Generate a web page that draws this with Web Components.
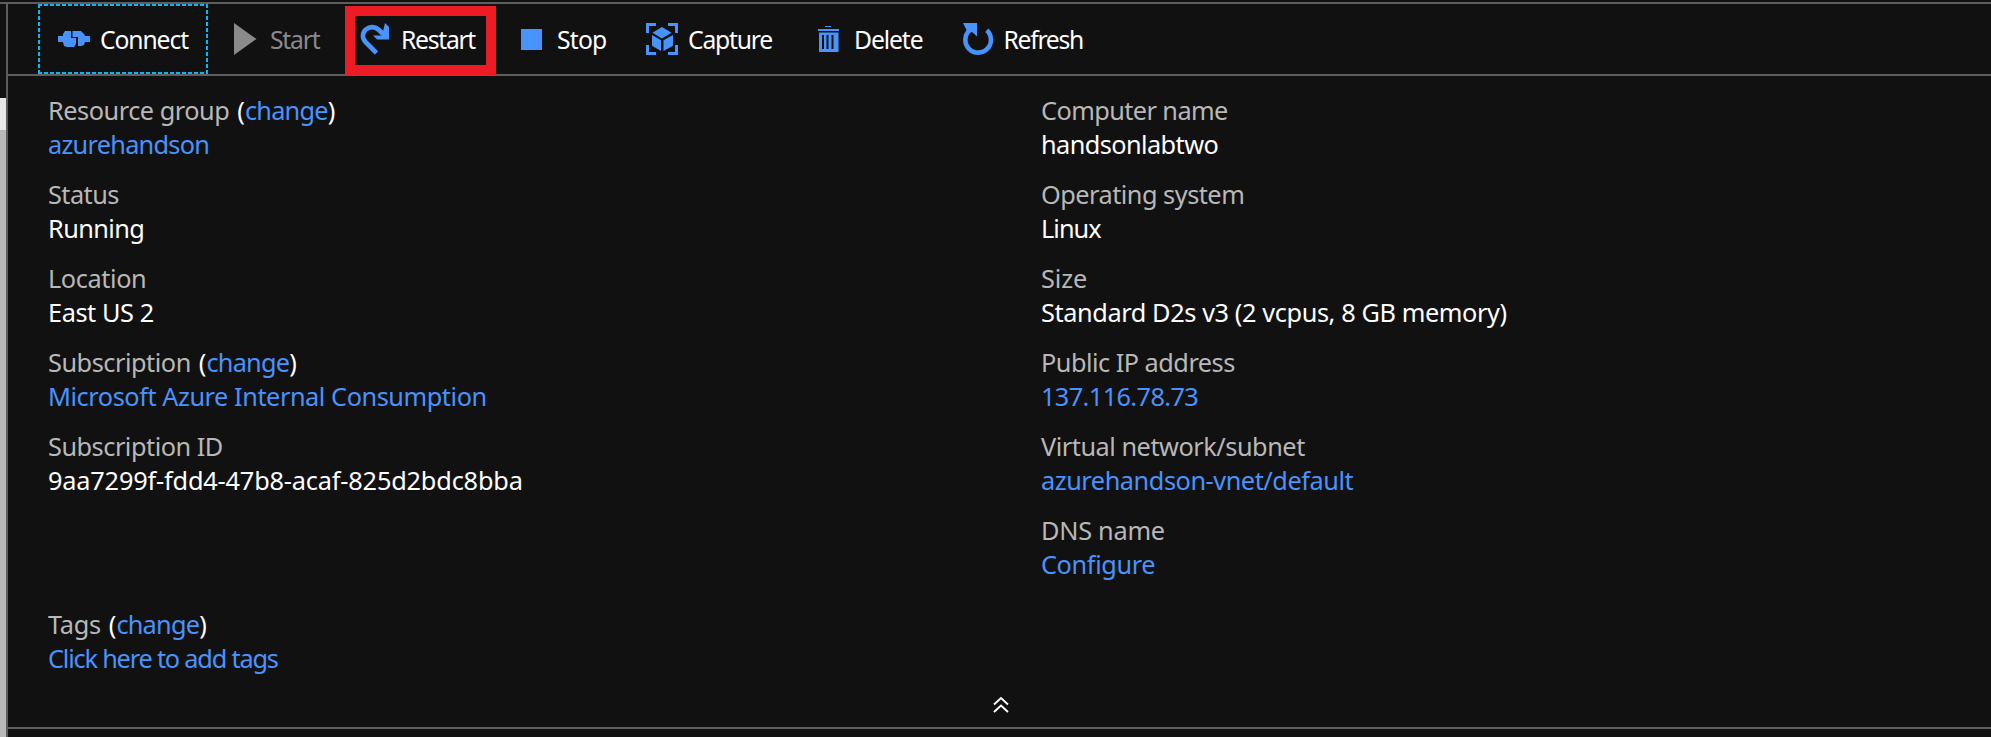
<!DOCTYPE html>
<html lang="en">
<head>
<meta charset="utf-8">
<title>Virtual machine overview</title>
<style>
html,body{margin:0;height:100%;background:#111;overflow:hidden}
body{font-family:"Noto Sans","Open Sans",sans-serif;color:#fff}
</style>
</head>
<body>
<vm-blade></vm-blade>
<script>
const define = (name, html, init) => {
  const t = document.createElement('template');
  t.innerHTML = html;
  customElements.define(name, class extends HTMLElement {
    constructor() { super(); this.attachShadow({mode: 'open'}).append(t.content.cloneNode(true)); }
    connectedCallback() { if (init) init.call(this, this.shadowRoot); }
  });
};

const icons = {
  connect: '<path d="M0 13h5v-2l2-3h6v7h5v6l-2 3H9l-3-1-1-4H0zM14.500 8H23l3 3 1 2h5v6h-5l-1 3-3 1h-3v-9h-5.500z"/>',
  start: '<path fill="#8a8a8a" d="M6 0v32l22.500-16z"/>',
  restart: '<path fill="none" stroke="#4894fe" stroke-width="4.600" d="M17.500 30 6.500 19C2.800 15.200 3.300 9.500 6.800 6.500 11 3 16.500 3.500 20 7l4 4"/><path d="M26 0l4 4v12.500H18l-4-4h9z"/>',
  stop: '<path d="M6 6h21v21H6z"/>',
  capture: '<path d="M0 0h10v3H3v7H0zM22 0h10v10h-3V3h-7zM0 22h3v7h7v3H0zM29 22h3v10H22v-3h7zM16 4l9.500 5.800L16 15.500 6.500 9.800zM6 12l9 5.300V28l-9-5.300zM17.500 17.300 27 12v10.700L17.500 28z"/>',
  delete: '<path d="M13 3h6v1h-6zM6 6h21v2H6zM7 9.500h19.500V29H7zM10 12v14h2V12zm4.500 0v14h2V12zm5 0v14h2V12z" fill-rule="evenodd"/>',
  refresh: '<path fill="none" stroke="#4894fe" stroke-width="4.600" d="M7.500 7.400A12.800 12.800 0 1 0 24.700 7.300"/><path d="M1 0h14v13.500l-5-4.500-4 1z"/>'
};

/* Inline text tracked so that its advance equals the "w" attribute. */
define('fit-text', '<style>:host{display:inline-block;white-space:pre}</style><slot></slot>', function () {
  const w = parseFloat(this.getAttribute('w'));
  const n = this.textContent.length;
  this.style.letterSpacing = '0';
  const natural = this.getBoundingClientRect().width;
  this.style.letterSpacing = ((w - natural) / n) + 'px';
});

define('tool-button', `<style>
:host{display:flex;box-sizing:border-box;height:70px;align-items:flex-start;padding-left:20px;font-size:24.700px;line-height:34px;flex:none}
svg{width:32px;height:32px;margin-top:19px;fill:#4894fe;flex:none}
.t{margin:19px 0 0 10px}
:host([disabled]) .t{color:#8a8a8a}
:host([focused]){background:
 repeating-linear-gradient(90deg,#00bcf2 0 4px,transparent 4px 6px) 0 0/100% 2px no-repeat,
 repeating-linear-gradient(90deg,#00bcf2 0 4px,transparent 4px 6px) 0 100%/100% 2px no-repeat,
 repeating-linear-gradient(#00bcf2 0 4px,transparent 4px 6px) 0 0/2px 100% no-repeat,
 repeating-linear-gradient(#00bcf2 0 4px,transparent 4px 6px) 100% 0/2px 100% no-repeat}
:host([marked]){position:relative}
:host([marked])::after{content:"";position:absolute;left:6px;top:2px;width:131px;height:49px;border:10px solid #ed1c24}
</style><svg viewBox="0 0 32 32"></svg><div class="t"><slot></slot></div>`, function (r) {
  this.style.width = this.getAttribute('size') + 'px';
  r.querySelector('svg').innerHTML = icons[this.getAttribute('icon')];
});

define('tool-bar', `<style>:host{display:flex;height:70px;padding-left:30px;border-bottom:2px solid #5e5e5e}</style><slot></slot>`);

define('info-field', `<style>
:host{display:block;height:84px;font-size:25.300px;line-height:34px;white-space:nowrap}
.l,.v{height:34px;display:flex}
.l{color:#b8b8b8}
.v{color:#fff}
:host([link]) .v{color:#4894fe}
</style><div class="l"><slot name="label"></slot><slot name="change"></slot></div><div class="v"><slot></slot></div>`);

define('change-link', `<style>:host{display:flex;color:#fff}a{color:#4894fe}</style>(<a><fit-text w="82.800">change</fit-text></a>)`);

define('side-rail', `<style>
:host{display:flex;flex-direction:column;width:6px;border-right:2px solid #5e5e5e;flex:none}
.a{height:94px}.b{height:32px;background:#e8e8e8}.c{flex:1;background:#b9b9b9}
</style><div class="a"></div><div class="b"></div><div class="c"></div>`);

const field = (label, w, value, vw, link, gap) =>
  `<info-field ${link ? 'link' : ''}><fit-text slot="label" w="${w - 0.7}">${label}</fit-text>` +
  (gap ? `<change-link slot="change" style="margin-left:${gap}px"></change-link>` : '') +
  `<fit-text w="${vw - 0.8}">${value}</fit-text></info-field>`;

define('vm-essentials', `<style>
:host{display:flex;flex-direction:column;height:653px;box-sizing:border-box;padding:17px 0 0 40px;border-bottom:2px solid #5e5e5e}
.cols{display:grid;grid-template-columns:993px 1fr;height:514px;flex:none}
.fold{display:flex;justify-content:center;margin:5px 37px 0 0}
svg{display:block;width:18px;height:18px;fill:none;stroke:#fff;stroke-width:1.900}
.tags{height:84px;flex:none}
</style>
<div class="cols"><div>
${field('Resource group', 182, 'azurehandson', 162, 1, 8)}
${field('Status', 71.500, 'Running', 97, 0)}
${field('Location', 99, 'East US 2', 106.500, 0)}
${field('Subscription', 143.500, 'Microsoft Azure Internal Consumption', 439.500, 1, 8)}
${field('Subscription ID', 175.500, '9aa7299f-fdd4-47b8-acaf-825d2bdc8bba', 475.500, 0)}
</div><div>
${field('Computer name', 187.500, 'handsonlabtwo', 178, 0)}
${field('Operating system', 204, 'Linux', 60.500, 0)}
${field('Size', 47, 'Standard D2s v3 (2 vcpus, 8 GB memory)', 466.500, 0)}
${field('Public IP address', 194.500, '137.116.78.73', 158, 1)}
${field('Virtual network/subnet', 264.500, 'azurehandson-vnet/default', 313, 1)}
${field('DNS name', 124.500, 'Configure', 115, 1)}
</div></div>
<div class="tags">${field('Tags', 53.500, 'Click here to add tags', 230.500, 1, 8)}</div>
<div class="fold"></div>`, function (r) {
  r.querySelector('.fold').innerHTML = '<svg viewBox="0 0 18 18"><path d="M2 8.500 9 2l7 6.500M2 16l7-6.500 7 6.500"/></svg>';
});

define('vm-blade', `<style>
:host{display:flex;flex-direction:column;height:737px;box-sizing:border-box;padding-top:2px}
.rule{height:2px;background:#5e5e5e;flex:none}
.body{display:flex;flex:1;min-height:0}
main{flex:1;min-width:0}
</style>
<div class="rule"></div>
<div class="body"><side-rail></side-rail><main>
<tool-bar>
<tool-button icon="connect" size="170" focused><fit-text w="88">Connect</fit-text></tool-button>
<tool-button icon="start" size="131" disabled><fit-text w="49.500">Start</fit-text></tool-button>
<tool-button icon="restart" size="156" marked><fit-text w="74">Restart</fit-text></tool-button>
<tool-button icon="stop" size="131"><fit-text w="49.500">Stop</fit-text></tool-button>
<tool-button icon="capture" size="166"><fit-text w="84">Capture</fit-text></tool-button>
<tool-button icon="delete" size="149.500"><fit-text w="68.500">Delete</fit-text></tool-button>
<tool-button icon="refresh" size="160"><fit-text w="79.500">Refresh</fit-text></tool-button>
</tool-bar>
<vm-essentials></vm-essentials>
</main></div>`);
</script>
</body>
</html>
